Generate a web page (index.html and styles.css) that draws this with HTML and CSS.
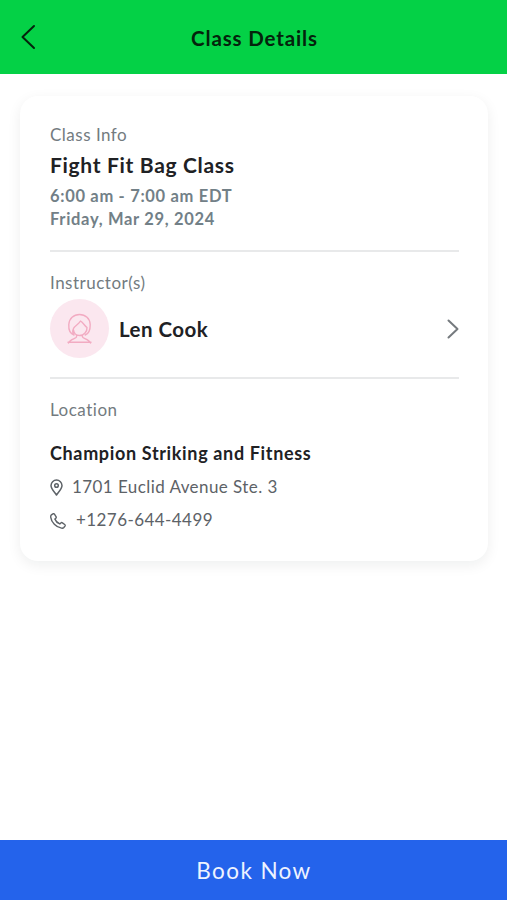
FILE: index.html
```html
<!DOCTYPE html>
<html lang="en">
<head>
<meta charset="utf-8">
<title>Class Details</title>
<link rel="stylesheet" href="styles.css">
</head>
<body>
<header class="topbar">
  <svg class="back" viewBox="0 0 16 26"><path d="M14 2 2.500 13 14 24"/></svg>
  <h1>Class Details</h1>
</header>
<main>
  <article class="card">
    <section class="info">
      <p class="label">Class Info</p>
      <h2>Fight Fit Bag Class</h2>
      <p class="when">6:00 am - 7:00 am EDT</p>
      <p class="when">Friday, Mar 29, 2024</p>
    </section>
    <section class="instructor">
      <p class="label">Instructor(s)</p>
      <div class="person">
        <div class="avatar">
          <svg viewBox="0 0 25 31"><path d="M7 22C3 20.500 1.500 16 1.800 11.500 2.200 5.500 6.500 1.500 12.500 1.500S23 5.500 23.200 11.500c.1 4.500-1 9-5 10.500M7 22c-1.500-2-1.500-4.500-.5-6.500C8 12.500 11.500 11.500 13.500 8c2.500 1.500 4 4.500 6.500 6.500.3 4-3 8-7.500 8-3 0-5.500-2-6-5.500M9.500 22.500V24c0 1.500-6.500 2-8 6M15.500 22.500V24c0 1.500 6.500 2 8 6M1 29.300h23"/></svg>
        </div>
        <strong class="name">Len Cook</strong>
        <svg class="go" viewBox="0 0 12 20"><path d="m1.500 1.500 9 8.500-9 8.500"/></svg>
      </div>
    </section>
    <section class="location">
      <p class="label">Location</p>
      <h3>Champion Striking and Fitness</h3>
      <p class="contact">
        <svg class="pin" viewBox="0 0 13 17"><path d="M6.500 16C5 13.500 1 10.300 1 6.600a5.500 5.500 0 0 1 11 0C12 10.300 8 13.500 6.500 16Z"/><circle cx="6.500" cy="6.500" r="1.800"/></svg>
        <span class="address">1701 Euclid Avenue Ste. 3</span>
      </p>
      <p class="contact">
        <svg class="phone" viewBox="0 0 17 17"><path d="M1.200 2.300 3 1c.7-.5 1.300-.3 1.700.3l1.700 2.500c.4.600.3 1.200-.2 1.700l-1 1c.8 2 3 4.200 5.200 5.100l1.100-1c.5-.5 1.100-.5 1.700-.1l2.400 1.700c.6.400.7 1.100.3 1.700l-1.200 1.500c-.6.700-1.500.9-2.500.7C6.500 15 1.400 9.700.8 4.600c-.1-1 0-1.800.4-2.300Z"/></svg>
        <span class="tel">+1276-644-4499</span>
      </p>
    </section>
  </article>
</main>
<footer class="book">Book Now</footer>
</body>
</html>
```

FILE: styles.css
```css
* { box-sizing: border-box; }
body {
  margin: 0;
  height: 900px;
  display: flex;
  flex-direction: column;
  overflow: hidden;
  background: #fff;
  color: #202124;
  font-family: Lato, "Liberation Sans", sans-serif;
}
h1, h2, h3, p { margin: 0; }
svg { display: block; flex: none; fill: none; stroke: currentColor; stroke-linecap: round; stroke-linejoin: round; }

.topbar {
  height: 74px;
  flex: none;
  display: grid;
  grid-template-columns: 16px 1fr 16px;
  align-items: center;
  padding: 0 20px;
  background: #04d146;
  color: #04230c;
}
.back { width: 16px; height: 26px; stroke-width: 2; }
h1 { font-size: 20.5px; line-height: 28px; text-align: center; letter-spacing: .86px; padding: 1px 0 0 2px; }

main { flex: 1; padding: 22px 19px 0 20px; }
.card {
  height: 465px;
  padding: 27px 29px 0 30px;
  border-radius: 18px;
  background: #fff;
  box-shadow: 0 4px 14px rgba(20, 25, 35, .07);
}
.label { font-size: 17px; line-height: 24px; color: #737b80; letter-spacing: .5px; }
.info { height: 129px; border-bottom: 2px solid #e8e9ea; }
h2 { font-size: 21px; line-height: 36px; letter-spacing: .68px; }
.when { font-size: 16.5px; line-height: 23px; font-weight: 700; color: #728087; letter-spacing: .68px; }
h2 + .when { margin-top: 2px; }

.instructor { height: 127px; padding-top: 19px; border-bottom: 2px solid #e8e9ea; }
.person { display: flex; align-items: center; margin-top: 4px; height: 59px; }
.avatar {
  width: 59px;
  height: 59px;
  border-radius: 50%;
  background: #fbe7ef;
  color: #f2abc2;
  display: flex;
  align-items: center;
  justify-content: center;
}
.avatar svg { width: 25px; height: 31px; stroke-width: 1.4; }
.name { font-size: 20.5px; line-height: 28px; margin: 0 auto 0 10px; letter-spacing: .45px; }
.go { width: 12px; height: 20px; stroke-width: 2; color: #757a7e; }

.location { padding-top: 19px; }
h3 { font-size: 18px; line-height: 26px; margin: 18px 0 4px; letter-spacing: .65px; }
.contact { display: flex; align-items: center; height: 33px; font-size: 17px; line-height: 24px; color: #5d6267; letter-spacing: .43px; }
.contact svg { position: relative; top: 1px; }
.pin { width: 13px; height: 17px; margin-right: 9px; stroke-width: 1.5; }
.phone { width: 16px; height: 16px; margin-right: 10px; stroke-width: 1.5; }

.book {
  height: 60px;
  flex: none;
  display: flex;
  align-items: center;
  justify-content: center;
  background: #2463eb;
  color: #eef3ff;
  font-size: 22.5px;
  letter-spacing: 1.4px;
  padding-left: 1px;
}
```
